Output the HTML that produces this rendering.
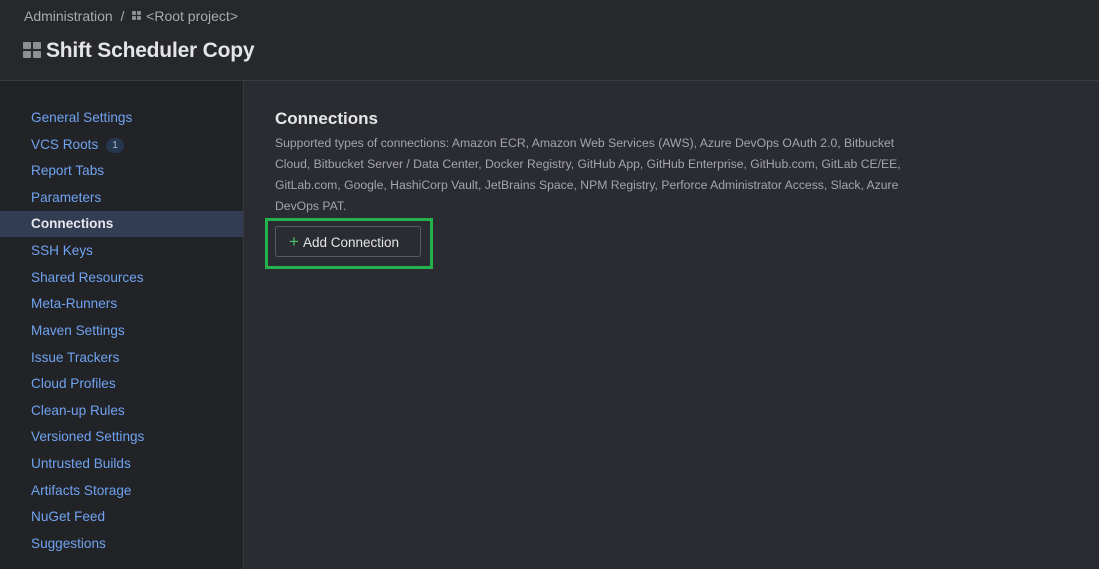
<!DOCTYPE html>
<html><head><style>
body{margin:0;width:1099px;height:569px;overflow:hidden;background:#2b2c31;font-family:"Liberation Sans",sans-serif;}
.hdr{position:absolute;left:0;top:0;width:1099px;height:80px;background:#27282c;border-bottom:1px solid #3a3b40;}
.bc{position:absolute;left:24px;top:8px;font-size:14px;color:#a8aab0;}
.t{position:absolute;left:46px;top:39px;font-size:21px;color:#e4e5e8;font-weight:bold;letter-spacing:-0.2px}
.sq{position:absolute;background:#8d8f95;border-radius:1px}
.sb{position:absolute;left:0;top:81px;width:243px;height:488px;background:#222327;border-right:1px solid #3a3b40;}
.sb div{position:absolute;left:31px;font-size:13.6px;color:#6fa3f0;height:26px;line-height:26px}
.sel{left:0!important;width:243px;padding-left:31px;box-sizing:border-box;background:#323c52;color:#e6e7ea!important;font-weight:bold}
.badge{display:inline-block;background:#26364f;color:#9fb8e0;font-size:10px;border-radius:8px;width:18px;height:15px;line-height:15px;text-align:center;margin-left:4px;vertical-align:1px}
h2{position:absolute;left:275px;top:109px;margin:0;font-size:17px;color:#e6e7ea}
.p{position:absolute;left:275px;top:133px;width:640px;font-size:12.2px;line-height:21px;color:#a3a5ab}
.gb{position:absolute;left:265px;top:218px;width:162px;height:45px;border:3px solid #22b14c}
.btn{position:absolute;left:275px;top:226px;width:146px;height:31px;border:1px solid #5a5c62;border-radius:3px;box-sizing:border-box;color:#e3e4e7;font-size:13.5px;line-height:29px;padding-left:13px}
.btn b{color:#4cc36b;font-weight:normal;font-size:17px;margin-right:4px}
</style></head><body>
<div class="hdr">
<div class="bc">Administration &nbsp;/&nbsp; <span style="display:inline-block;width:14px"></span>&lt;Root project&gt;</div>
<div class="sq" style="left:132px;top:11px;width:4px;height:4px"></div>
<div class="sq" style="left:137px;top:11px;width:4px;height:4px"></div>
<div class="sq" style="left:132px;top:16px;width:4px;height:4px"></div>
<div class="sq" style="left:137px;top:16px;width:4px;height:4px"></div>
<div class="sq" style="left:23px;top:42px;width:8px;height:7px"></div>
<div class="sq" style="left:33px;top:42px;width:8px;height:7px"></div>
<div class="sq" style="left:23px;top:51px;width:8px;height:7px"></div>
<div class="sq" style="left:33px;top:51px;width:8px;height:7px"></div>
<div class="t">Shift Scheduler Copy</div>
</div>
<div class="sb">
<div style="top:24px">General Settings</div>
<div style="top:51px">VCS Roots <span class="badge">1</span></div>
<div style="top:77px">Report Tabs</div>
<div style="top:104px">Parameters</div>
<div class="sel" style="top:130px">Connections</div>
<div style="top:157px">SSH Keys</div>
<div style="top:184px">Shared Resources</div>
<div style="top:210px">Meta-Runners</div>
<div style="top:237px">Maven Settings</div>
<div style="top:264px">Issue Trackers</div>
<div style="top:290px">Cloud Profiles</div>
<div style="top:317px">Clean-up Rules</div>
<div style="top:343px">Versioned Settings</div>
<div style="top:370px">Untrusted Builds</div>
<div style="top:397px">Artifacts Storage</div>
<div style="top:423px">NuGet Feed</div>
<div style="top:450px">Suggestions</div>
</div>
<h2>Connections</h2>
<div class="p">Supported types of connections: Amazon ECR, Amazon Web Services (AWS), Azure DevOps OAuth 2.0, Bitbucket<br>Cloud, Bitbucket Server / Data Center, Docker Registry, GitHub App, GitHub Enterprise, GitHub.com, GitLab CE/EE,<br>GitLab.com, Google, HashiCorp Vault, JetBrains Space, NPM Registry, Perforce Administrator Access, Slack, Azure<br>DevOps PAT.</div>
<div class="gb"></div>
<div class="btn"><b>+</b>Add Connection</div>
</body></html>
